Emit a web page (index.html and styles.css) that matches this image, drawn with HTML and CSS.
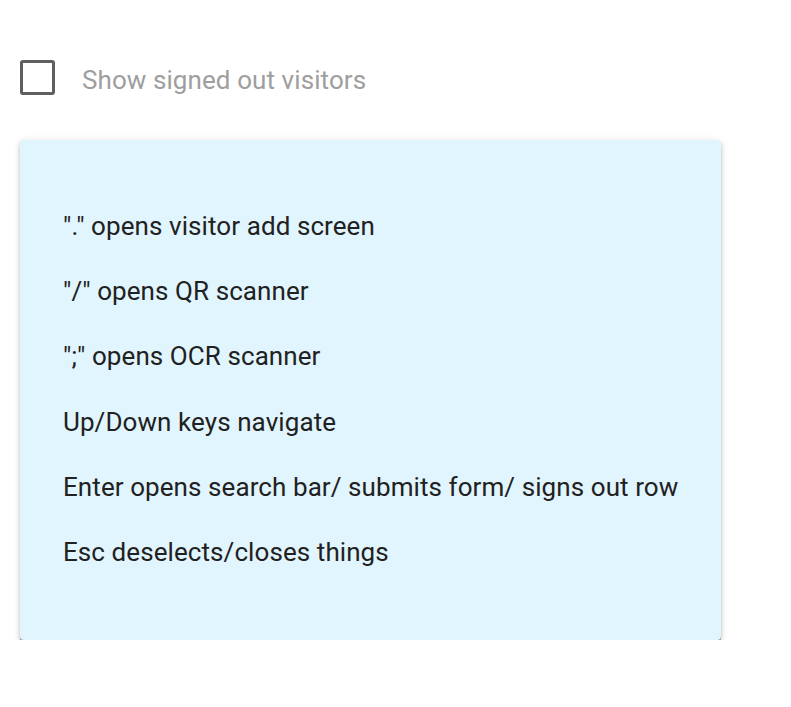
FILE: index.html
```html
<!DOCTYPE html>
<html>
<head>
<meta charset="utf-8">
<link rel="stylesheet" href="styles.css">
</head>
<body>
<div class="page">
  <label class="check-row">
    <span class="box"></span>
    <span class="check-label">Show signed out visitors</span>
  </label>
  <div class="card">
    <p class="line">"." opens visitor add screen</p>
    <p class="line">"/" opens QR scanner</p>
    <p class="line">";" opens OCR scanner</p>
    <p class="line">Up/Down keys navigate</p>
    <p class="line">Enter opens search bar/ submits form/ signs out row</p>
    <p class="line">Esc deselects/closes things</p>
  </div>
</div>
</body>
</html>
```
FILE: styles.css
```css
html, body {
  margin: 0;
  padding: 0;
  background: #ffffff;
}
body {
  font-family: Roboto, "Liberation Sans", sans-serif;
}
.page {
  padding: 60px 70px 0 20px;
  display: flex;
  flex-direction: column;
}
.check-row {
  display: flex;
  align-items: center;
  gap: 27px;
  height: 34px;
}
.box {
  width: 29px;
  height: 29px;
  border: 3px solid #5f5f5f;
  border-radius: 3px;
  flex: none;
}
.check-label {
  font-size: 26px;
  letter-spacing: 0.08px;
  color: #9e9e9e;
  line-height: 1;
  padding-top: 6px;
}
.card {
  margin-top: 46px;
  width: 701px;
  height: 500px;
  box-sizing: border-box;
  background: #e1f5fe;
  border-radius: 4px;
  box-shadow: 0 2px 0 0 rgba(0,0,0,.3), 0 3px 4px 0 rgba(0,0,0,.2), 0 1px 8px 0 rgba(0,0,0,.1);
  padding: 68px 20px 0 43px;
  display: flex;
  flex-direction: column;
  gap: 29.2px;
}
.line {
  margin: 0;
  font-size: 26px;
  letter-spacing: 0.08px;
  line-height: 36px;
  color: #212121;
}
```
